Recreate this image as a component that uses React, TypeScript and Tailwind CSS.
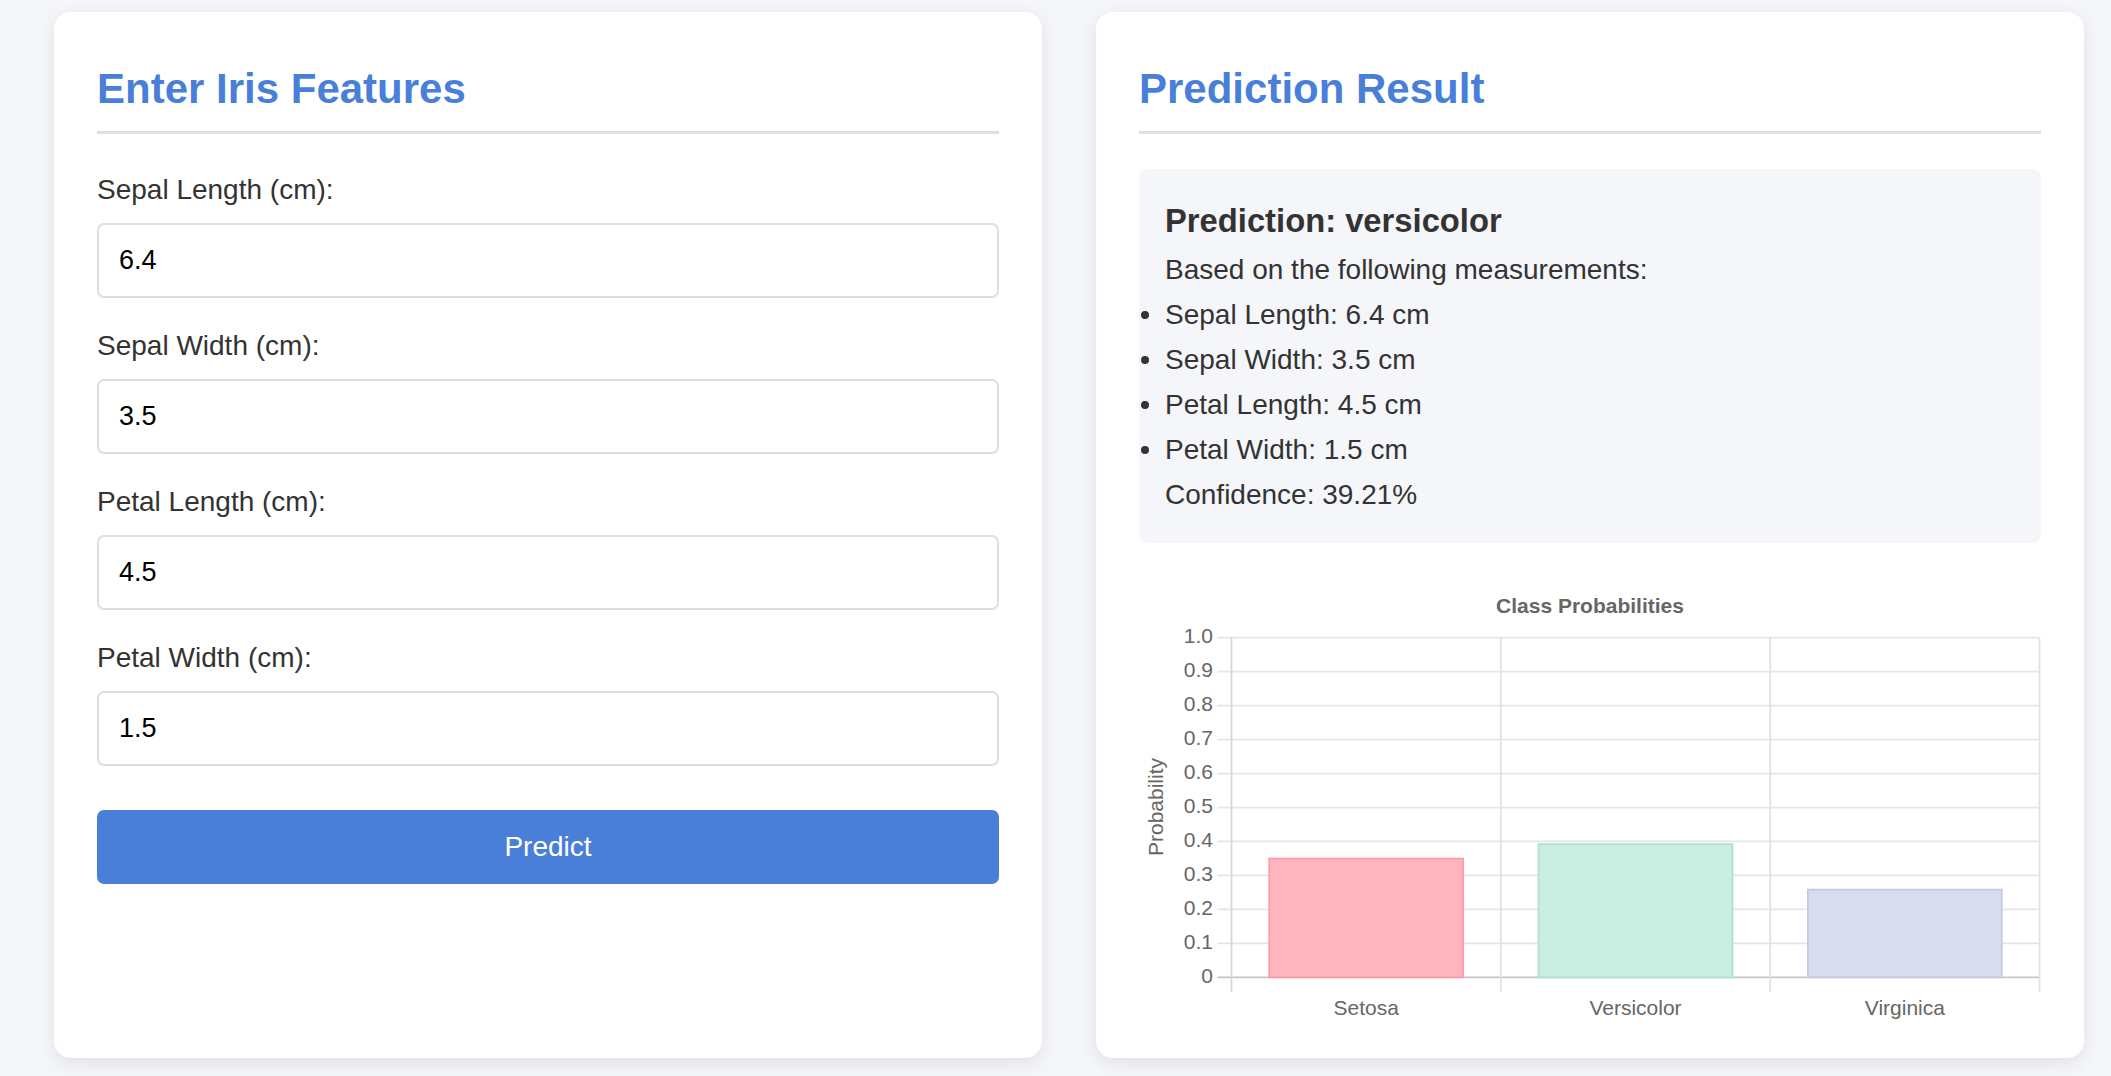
import type { ReactNode } from 'react';

const font = "font-['Liberation_Sans',Arial,sans-serif]";

const fields = [
  { label: 'Sepal Length (cm):', value: '6.4' },
  { label: 'Sepal Width (cm):', value: '3.5' },
  { label: 'Petal Length (cm):', value: '4.5' },
  { label: 'Petal Width (cm):', value: '1.5' },
];

// probabilities per class, in chart order
const bars = [
  { name: 'Setosa', value: 0.3497, fill: '#ffb5c0', stroke: '#ff9aab' },
  { name: 'Versicolor', value: 0.3921, fill: '#cbeee2', stroke: '#a9e2cd' },
  { name: 'Virginica', value: 0.2582, fill: '#d7dcee', stroke: '#c3cae6' },
];

const Card = ({ children }: { children: ReactNode }) => (
  <div className="w-[988px] rounded-[17px] bg-white px-[43px] pt-[53px] pb-[38px] shadow-[0_5px_18px_rgba(0,0,0,0.09)]">
    {children}
  </div>
);

const Title = ({ children }: { children: ReactNode }) => (
  <h2 className="border-b-[3px] border-[#e0e0e0] pb-[18px] text-[42px] leading-[48px] font-bold text-[#4a7fd9]">
    {children}
  </h2>
);

const ProbChart = () => {
  // plot area in svg coords
  const left = 92.5;
  const right = 900.5;
  const top = 77.7;
  const zero = 417.3;
  const h = zero - top;
  const cat = (right - left) / bars.length;
  const barW = cat * 0.72;
  const ticks = [1, 0.9, 0.8, 0.7, 0.6, 0.5, 0.4, 0.3, 0.2, 0.1, 0];

  return (
    <svg width="902" height="460" viewBox="0 0 902 460" className="block">
      <text x="451" y="47" textAnchor="middle" dominantBaseline="middle" fontSize="21" fontWeight="bold" fill="#666">
        Class Probabilities
      </text>
      <text
        x="0"
        y="0"
        transform="translate(18 247) rotate(-90)"
        textAnchor="middle"
        dominantBaseline="middle"
        fontSize="21"
        fill="#666"
      >
        Probability
      </text>

      {ticks.map((t) => {
        const y = zero - t * h;
        return (
          <g key={t}>
            <line x1={78.5} x2={right} y1={y} y2={y} stroke={t === 0 ? '#c6c6c6' : '#e5e5e5'} strokeWidth="1.75" />
            <text x="74" y={y} textAnchor="end" dominantBaseline="middle" fontSize="21" fill="#666">
              {t === 0 ? '0' : t.toFixed(1)}
            </text>
          </g>
        );
      })}

      {[0, 1, 2, 3].map((i) => {
        const x = left + i * cat;
        return (
          <line key={i} x1={x} x2={x} y1={top} y2={431.7} stroke={i === 0 ? '#d6d6d6' : '#e2e2e2'} strokeWidth="1.75" />
        );
      })}

      {bars.map((b, i) => {
        const cx = left + cat * (i + 0.5);
        const bh = b.value * h;
        return (
          <g key={b.name}>
            <rect
              x={cx - barW / 2}
              y={zero - bh}
              width={barW}
              height={bh}
              fill={b.fill}
              stroke={b.stroke}
              strokeWidth="1.75"
            />
            <text x={cx} y="449" textAnchor="middle" dominantBaseline="middle" fontSize="21" fill="#666">
              {b.name}
            </text>
          </g>
        );
      })}
    </svg>
  );
};

const App = () => {
  return (
    <div className={`${font} min-h-screen bg-[#f4f6fa] pl-[54px] pt-[12px] pb-[18px] text-[#333]`}>
      <div className="flex items-stretch gap-[54px]">
        {/* 输入表单 */}
        <Card>
          <Title>Enter Iris Features</Title>
          <form className="mt-[40px]" onSubmit={(e) => e.preventDefault()}>
            {fields.map((f) => (
              <div key={f.label} className="mb-[32px]">
                <label className="mb-[17px] block text-[28px] leading-[32px] text-[#333]">{f.label}</label>
                <input
                  type="text"
                  defaultValue={f.value}
                  className="box-border block h-[75px] w-full rounded-[7px] border-2 border-[#dedede] bg-white px-[20px] text-[27px] text-black outline-none"
                />
              </div>
            ))}
            <button
              type="submit"
              className="mt-[44px] block h-[74px] w-full rounded-[7px] bg-[#4a7fd9] text-[28px] text-white"
            >
              Predict
            </button>
          </form>
        </Card>

        {/* 预测结果 */}
        <Card>
          <Title>Prediction Result</Title>
          <div className="mt-[35px] rounded-[9px] bg-[#f5f6fa] px-[26px] pt-[33px] pb-[26px]">
            <h3 className="mb-[7px] text-[32.76px] leading-[38px] font-bold text-[#333]">Prediction: versicolor</h3>
            <p className="text-[28px] leading-[45px]">Based on the following measurements:</p>
            <ul className="text-[28px] leading-[45px]">
              {fields.map((f) => (
                <li key={f.label} className="-ml-[24px] flex items-center">
                  <span className="mr-[16px] h-[8px] w-[8px] rounded-full bg-[#333]" />
                  {f.label.replace(' (cm):', '')}: {f.value} cm
                </li>
              ))}
            </ul>
            <p className="text-[28px] leading-[45px]">Confidence: 39.21%</p>
          </div>
          <div className="mt-[17px]">
            <ProbChart />
          </div>
        </Card>
      </div>
    </div>
  );
};

export default App;
